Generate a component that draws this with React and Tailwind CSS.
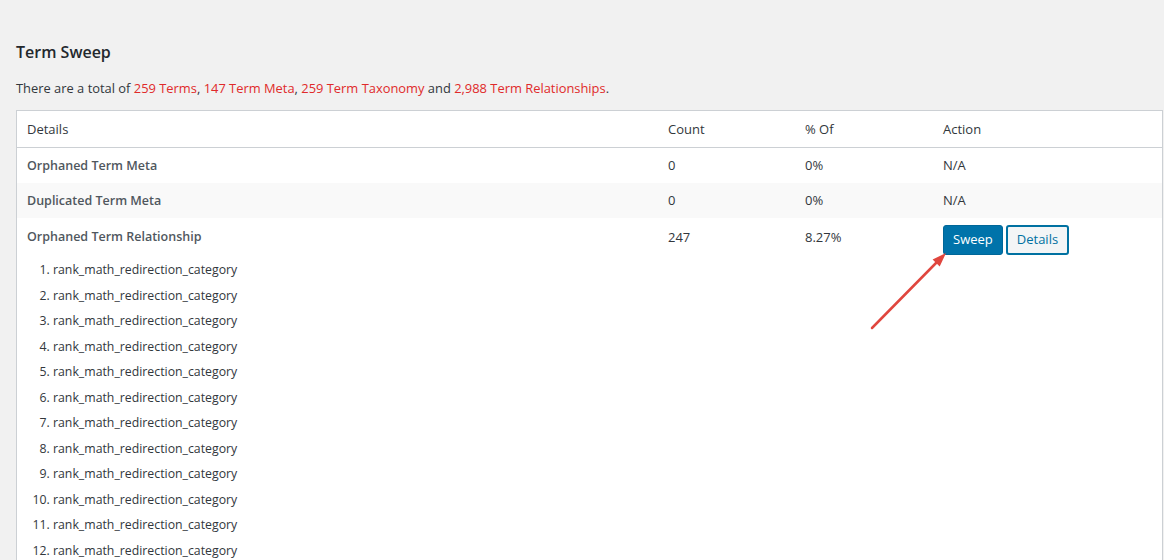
import React from "react";

const rows = [
  { name: "Orphaned Term Meta", count: "0", pct: "0%", action: "N/A" },
  { name: "Duplicated Term Meta", count: "0", pct: "0%", action: "N/A", alt: true },
];

const items = Array.from({ length: 12 }, () => "rank_math_redirection_category");

const App = () => {
  return (
    <div className="min-h-screen bg-[#f1f1f1] text-[#32373c] text-[13px] font-['Open_Sans','Noto_Sans',sans-serif] px-4 pt-[40px] overflow-hidden h-[560px]">
      <h2 className="text-[16px] font-semibold text-[#23282d] leading-[24px]">Term Sweep</h2>
      <p className="mt-[12px] leading-[24px] text-[12.9px]">
        There are a total of <span className="text-[#e02a2a]">259 Terms</span>,{" "}
        <span className="text-[#e02a2a]">147 Term Meta</span>,{" "}
        <span className="text-[#e02a2a]">259 Term Taxonomy</span> and{" "}
        <span className="text-[#e02a2a]">2,988 Term Relationships</span>.
      </p>

      <div className="mt-[10px] w-[1147px] bg-white border border-[#ccd0d4]">
        {/* Header */}
        <div className="grid grid-cols-[640px_137px_138px_1fr] border-b border-[#ccd0d4] h-[37px] items-center pt-[1px]">
          <div className="pl-[10px]">Details</div>
          <div className="pl-[11px]">Count</div>
          <div className="pl-[11px]">% Of</div>
          <div className="pl-[11px]">Action</div>
        </div>

        {rows.map((r) => (
          <div
            key={r.name}
            className={`grid grid-cols-[640px_137px_138px_1fr] items-center h-[35px] pt-[1px] ${r.alt ? "bg-[#f9f9f9]" : ""}`}
          >
            <div className="pl-[10px] font-semibold text-[12.5px] text-[#50575e]">{r.name}</div>
            <div className="pl-[11px]">{r.count}</div>
            <div className="pl-[11px]">{r.pct}</div>
            <div className="pl-[11px]">{r.action}</div>
          </div>
        ))}

        {/* Orphaned relationships */}
        <div className="grid grid-cols-[640px_137px_138px_1fr] pt-[9px]">
          <div className="pl-[10px]">
            <div className="font-semibold text-[12.5px] text-[#50575e] leading-[20px]">Orphaned Term Relationship</div>
            <ol className="list-decimal pl-[26px] mt-[10px] text-[12.3px]">
              {items.map((it, i) => (
                <li key={i} className="leading-[25.55px]">
                  {it}
                </li>
              ))}
            </ol>
          </div>
          <div className="pl-[11px] leading-[20px]">247</div>
          <div className="pl-[11px] leading-[20px]">8.27%</div>
          <div className="pl-[11px] relative">
            <div className="flex gap-[3px] -mt-[2px]">
              <button className="h-[30px] px-[9px] rounded-[3px] bg-[#0073aa] border border-[#006799] text-white">
                Sweep
              </button>
              <button className="h-[30px] px-[9px] rounded-[3px] bg-[#f3f5f6] border-2 border-[#0071a1] text-[#0071a1]">
                Details
              </button>
            </div>
            <svg
              className="absolute left-[-72px] top-[17px]"
              width="90"
              height="90"
              viewBox="0 0 90 90"
            >
              <line x1="12" y1="84" x2="78" y2="17" stroke="#e0463e" strokeWidth="2.5" strokeLinecap="round" />
              <polygon points="86,9 72.6,15.4 79.7,22.4" fill="#e0463e" />
            </svg>
          </div>
        </div>
      </div>
    </div>
  );
};

export default App;
